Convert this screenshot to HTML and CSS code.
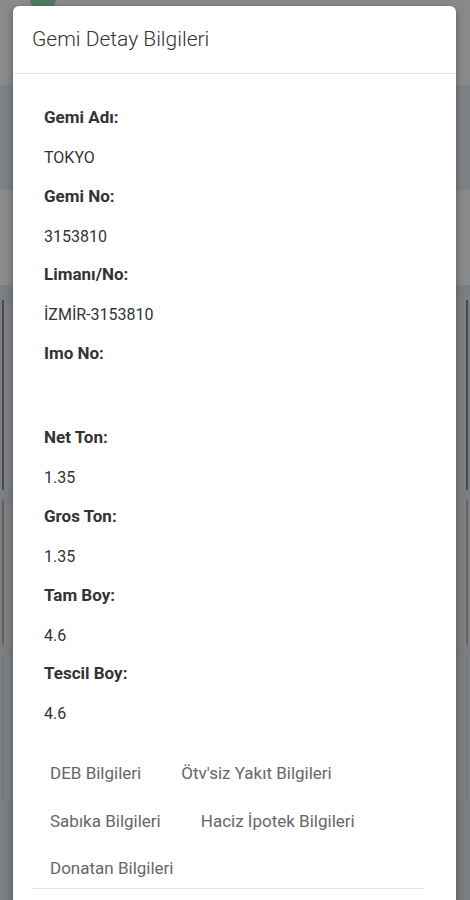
FILE: index.html
```html
<!DOCTYPE html>
<html lang="tr">
<head>
<meta charset="utf-8">
<title>Gemi Detay Bilgileri</title>
<link rel="stylesheet" href="styles.css">
</head>
<body>
<div class="page">
  <div class="bg-header"><span class="avatar"></span></div>
  <div class="bg-search"></div>
  <div class="bg-tabs"></div>
  <div class="bg-list">
    <div class="bg-card card-dark"></div>
    <div class="bg-card card-red"></div>
    <div class="bg-card card-green"></div>
  </div>
</div>
<div class="modal">
  <div class="modal-header">
    <h4 class="modal-title">Gemi Detay Bilgileri</h4>
  </div>
  <div class="modal-body">
    <div class="field"><div class="label">Gemi Adı:</div><div class="value">TOKYO</div></div>
    <div class="field"><div class="label">Gemi No:</div><div class="value">3153810</div></div>
    <div class="field"><div class="label">Limanı/No:</div><div class="value">İZMİR-3153810</div></div>
    <div class="field"><div class="label">Imo No:</div><div class="value empty"></div></div>
    <div class="field"><div class="label">Net Ton:</div><div class="value">1.35</div></div>
    <div class="field"><div class="label">Gros Ton:</div><div class="value">1.35</div></div>
    <div class="field"><div class="label">Tam Boy:</div><div class="value">4.6</div></div>
    <div class="field"><div class="label">Tescil Boy:</div><div class="value">4.6</div></div>
  </div>
  <div class="links">
    <button class="link-btn">DEB Bilgileri</button>
    <button class="link-btn">Ötv'siz Yakıt Bilgileri</button>
    <button class="link-btn">Sabıka Bilgileri</button>
    <button class="link-btn">Haciz İpotek Bilgileri</button>
    <button class="link-btn">Donatan Bilgileri</button>
  </div>
</div>
</body>
</html>
```
FILE: styles.css
```css
* { box-sizing: border-box; }
html, body {
  margin: 0;
  padding: 0;
  height: 900px;
  overflow: hidden;
  font-family: Roboto, "Liberation Sans", sans-serif;
  background: #7c7f82;
}
.page {
  display: flex;
  flex-direction: column;
  height: 900px;
}
.bg-header {
  height: 85px;
  background: #8a8a8a;
  position: relative;
}
.avatar {
  position: absolute;
  left: 30px;
  top: -14px;
  width: 26px;
  height: 26px;
  border-radius: 50%;
  background: #4f7a5e;
}
.bg-search { height: 105px; background: #7e8185; }
.bg-tabs { height: 95px; background: #888a8c; }
.bg-list {
  flex: 1;
  background: #7c7f82;
  display: flex;
  flex-direction: column;
  gap: 10px;
  padding: 15px 0 0 0;
}
.bg-card {
  margin: 0 2px;
  background: #7e8184;
}
.card-dark { height: 190px; border-left: 2px solid #4a4a4a; border-right: 2px solid #4a4a4a; }
.card-red { height: 145px; border-left: 2px solid #6d5c5c; border-right: 2px solid #6d5c5c; }
.card-green { height: 145px; border-left: 2px solid #6e7b78; border-right: 2px solid #6e7b78; }

.modal {
  position: absolute;
  left: 13px;
  top: 6px;
  width: 443px;
  height: 920px;
  background: #fff;
  border-radius: 6px;
  box-shadow: 0 3px 9px rgba(0,0,0,0.35);
}
.modal-header {
  padding: 19px 19px 20px;
  border-bottom: 1px solid #e5e5e5;
}
.modal-title {
  margin: 0;
  font-size: 21px;
  font-weight: 300;
  line-height: 28px;
  color: #333;
}
.modal-body {
  padding: 32px 31px 0;
}
.label {
  font-size: 17px;
  font-weight: 700;
  line-height: 22px;
  color: #333;
  margin-bottom: 19px;
}
.value {
  font-size: 16px;
  line-height: 22px;
  color: #333;
  margin-bottom: 15.6px;
}
.value.empty { height: 28px; }
.links {
  margin: 28px 32px 0 19px;
  border-bottom: 1px solid #e8e8e8;
  display: flex;
  flex-wrap: wrap;
  column-gap: 4px;
  row-gap: 7.5px;
}
.link-btn {
  font-family: Roboto, "Liberation Sans", sans-serif;
  font-size: 17px;
  line-height: 24px;
  padding: 8px 18px;
  border: 0;
  background: transparent;
  color: #666;
}
```
